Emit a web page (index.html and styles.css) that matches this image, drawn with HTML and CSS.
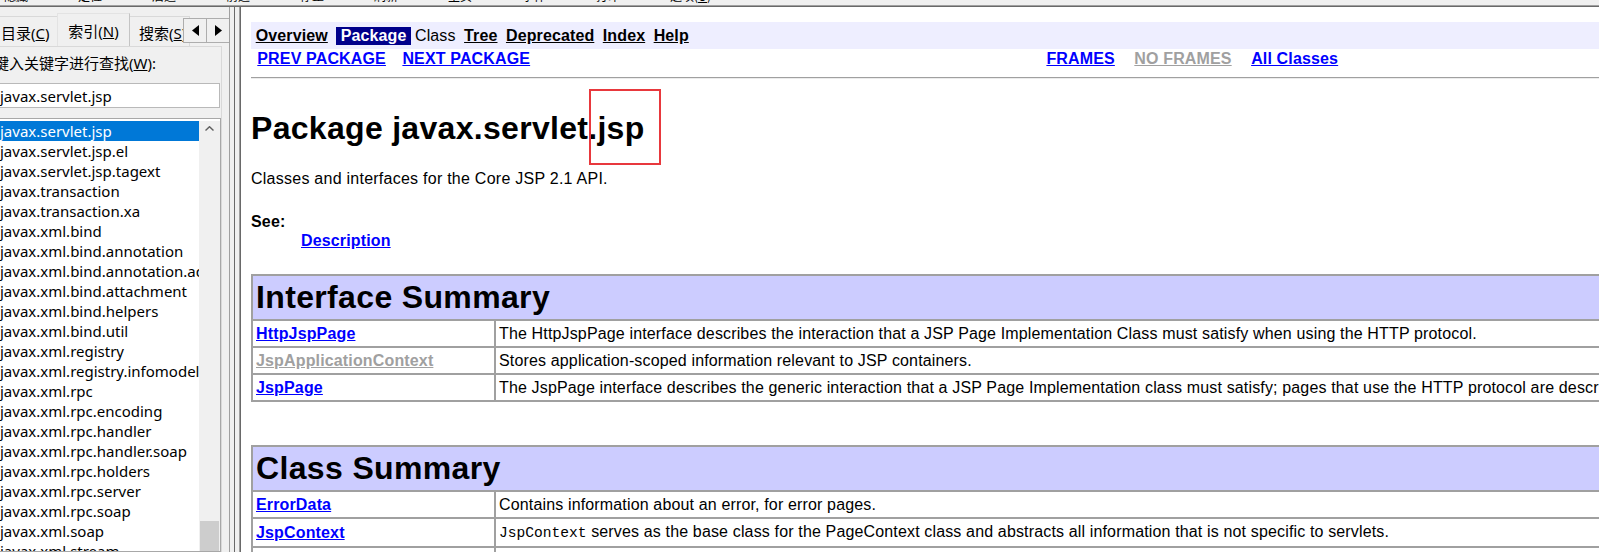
FILE: index.html
```html
<!DOCTYPE html>
<html lang="zh-CN">
<head>
<meta charset="utf-8">
<title>Package javax.servlet.jsp</title>
<link rel="stylesheet" href="styles.css">
</head>
<body>
<div class="window">
  <div class="toolbar">
    <span>隐藏</span><span>定位</span><span>后退</span><span>前进</span><span>停止</span><span>刷新</span><span>主页</span><span>字体</span><span>打印</span><span>选项(<u>O</u>)</span>
  </div>
  <div class="hsep"></div>
  <div class="main">
    <aside class="nav-pane">
      <div class="tabs">
        <div class="tab tab-c">目录(<u>C</u>)</div>
        <div class="tab tab-n">索引(<u>N</u>)</div>
        <div class="tab tab-s">搜索(<u>S</u>)</div>
      </div>
      <div class="tab-arrows">
        <div class="arr"><svg width="7" height="11" viewBox="0 0 7 11"><polygon points="7,0 7,11 0,5.5" fill="#000"/></svg></div>
        <div class="arr arr-r"><svg width="7" height="11" viewBox="0 0 7 11"><polygon points="0,0 0,11 7,5.5" fill="#000"/></svg></div>
      </div>
      <div class="tab-panel">
        <div class="kw-label">键入关键字进行查找(<u>W</u>):</div>
        <div class="kw-input">javax.servlet.jsp</div>
        <div class="listbox">
          <ul class="items">
            <li class="sel">javax.servlet.jsp</li>
            <li>javax.servlet.jsp.el</li>
            <li>javax.servlet.jsp.tagext</li>
            <li>javax.transaction</li>
            <li>javax.transaction.xa</li>
            <li>javax.xml.bind</li>
            <li>javax.xml.bind.annotation</li>
            <li>javax.xml.bind.annotation.adapters</li>
            <li>javax.xml.bind.attachment</li>
            <li>javax.xml.bind.helpers</li>
            <li>javax.xml.bind.util</li>
            <li>javax.xml.registry</li>
            <li>javax.xml.registry.infomodel</li>
            <li>javax.xml.rpc</li>
            <li>javax.xml.rpc.encoding</li>
            <li>javax.xml.rpc.handler</li>
            <li>javax.xml.rpc.handler.soap</li>
            <li>javax.xml.rpc.holders</li>
            <li>javax.xml.rpc.server</li>
            <li>javax.xml.rpc.soap</li>
            <li>javax.xml.soap</li>
            <li>javax.xml.stream</li>
          </ul>
          <div class="vscroll">
            <div class="up"><svg width="9" height="5" viewBox="0 0 9 5"><polyline points="0.5,4.5 4.5,0.7 8.5,4.5" fill="none" stroke="#606060" stroke-width="1.4"/></svg></div>
            <div class="thumb"></div>
          </div>
        </div>
      </div>
    </aside>
    <div class="splitter"></div>
    <main class="doc-pane">
      <div class="doc">
        <div class="navbar1">
          <a class="nb" href="#">Overview</a>
          <span class="nb rev">Package</span>
          <span class="nb plain">Class</span>
          <a class="nb" href="#">Tree</a>
          <a class="nb" href="#">Deprecated</a>
          <a class="nb" href="#">Index</a>
          <a class="nb" href="#">Help</a>
        </div>
        <div class="navbar2">
          <div class="nav2-left">
            <a class="lnk" href="#">PREV PACKAGE</a>
            <a class="lnk next" href="#">NEXT PACKAGE</a>
          </div>
          <div class="nav2-right">
            <a class="lnk" href="#">FRAMES</a>
            <a class="lnk gray sp" href="#">NO FRAMES</a>
            <a class="lnk sp" href="#">All Classes</a>
          </div>
        </div>
        <div class="hr"></div>
        <h1 class="title">Package javax.servlet<span class="mark">.jsp</span></h1>
        <p class="desc">Classes and interfaces for the Core JSP 2.1 API.</p>
        <dl class="see">
          <dt>See:</dt>
          <dd><a class="lnk" href="#">Description</a></dd>
        </dl>
        <table class="summary">
          <colgroup><col class="c1"><col class="c2"></colgroup>
          <tr><th colspan="2">Interface Summary</th></tr>
          <tr><td><a class="lnk" href="#">HttpJspPage</a></td><td>The HttpJspPage interface describes the interaction that a JSP Page Implementation Class must satisfy when using the HTTP protocol.</td></tr>
          <tr><td><a class="lnk gray" href="#">JspApplicationContext</a></td><td>Stores application-scoped information relevant to JSP containers.</td></tr>
          <tr><td><a class="lnk" href="#">JspPage</a></td><td>The JspPage interface describes the generic interaction that a JSP Page Implementation class must satisfy; pages that use the HTTP protocol are described by the HttpJspPage interface.</td></tr>
        </table>
        <table class="summary second">
          <colgroup><col class="c1"><col class="c2"></colgroup>
          <tr><th colspan="2">Class Summary</th></tr>
          <tr><td><a class="lnk" href="#">ErrorData</a></td><td>Contains information about an error, for error pages.</td></tr>
          <tr><td><a class="lnk" href="#">JspContext</a></td><td><code>JspContext</code> serves as the base class for the PageContext class and abstracts all information that is not specific to servlets.</td></tr>
          <tr><td><a class="lnk" href="#">JspEngineInfo</a></td><td>The JspEngineInfo is an abstract class that provides information on the current JSP engine.</td></tr>
        </table>
      </div>
    </main>
  </div>
</div>
</body>
</html>
```
FILE: styles.css
```css
* { box-sizing: border-box; }
html, body { margin: 0; padding: 0; overflow: hidden; }
body {
  width: 1599px;
  height: 552px;
  background: #f0f0f0;
  color: #000;
  font-family: "Liberation Sans", Arial, sans-serif;
}
.window { display: flex; flex-direction: column; height: 552px; }

/* clipped toolbar labels at the very top */
.toolbar {
  flex: none;
  height: 5px;
  overflow: hidden;
  display: flex;
  padding-left: 4px;
  font: 12px/16px "Noto Sans CJK SC", sans-serif;
}
.toolbar span { flex: none; width: 74px; margin-top: -12px; }
.hsep { flex: none; height: 2px; border-top: 1px solid #a0a0a0; border-bottom: 1px solid #696969; }

.main { flex: 1; display: flex; min-height: 0; }

/* ---------- left help navigation pane ---------- */
.nav-pane {
  flex: none;
  width: 237px;
  margin-left: -8px;
  position: relative;
  display: flex;
  flex-direction: column;
  overflow: hidden;
  font: 15px "Noto Sans", "Noto Sans CJK SC", sans-serif;
}
.tabs { flex: none; height: 39px; display: flex; align-items: flex-end; padding-left: 1px; }
.tab {
  flex: none;
  height: 30px;
  line-height: 32px;
  border: 1px solid #d9d9d9;
  border-bottom: none;
  white-space: nowrap;
  overflow: hidden;
  background: #f0f0f0;
}
.tab-c { width: 64px; padding-left: 7px; border-right: none; }
.tab-n {
  width: 73px;
  height: 33px;
  line-height: 35px;
  text-align: center;
  border-color: #e3e3e3 #c4c4c4 #e3e3e3 #e3e3e3;
}
.tab-s { width: 60px; padding-left: 9px; border-left: none; }

.tab-arrows { position: absolute; left: 191px; top: 11px; display: flex; }
.arr {
  width: 24px;
  height: 25px;
  border: 1px solid #adadad;
  background: #f0f0f0;
  display: flex;
  align-items: center;
  justify-content: center;
}
.arr-r { margin-left: -1px; }

.tab-panel {
  flex: 1;
  min-height: 0;
  width: 230px;
  border-top: 1px solid #d9d9d9;
  border-right: 1px solid #d9d9d9;
  padding: 6px 0 0 2px;
  display: flex;
  flex-direction: column;
}
.kw-label { line-height: 20px; white-space: nowrap; }
.kw-input {
  margin-top: 10px;
  width: 226px;
  height: 25px;
  border: 1px solid #b9b9b9;
  background: #fff;
  padding: 1px 0 0 5px;
  line-height: 22px;
  white-space: nowrap;
}
.listbox {
  margin-top: 10px;
  flex: 1;
  min-height: 0;
  width: 227px;
  display: flex;
  border: 1px solid #a8a8a8;
  padding-top: 2px;
  background: #fff;
  overflow: hidden;
}
.items { flex: 1; min-width: 0; margin: 0; padding: 0; list-style: none; overflow: hidden; }
.items li { height: 20px; line-height: 20px; padding-left: 5px; white-space: nowrap; overflow: hidden; }
.items li.sel { background: #0078d7; color: #fff; }
.vscroll { flex: none; width: 21px; background: #f0f0f0; display: flex; flex-direction: column; }
.up { height: 21px; display: flex; align-items: center; justify-content: center; }
.thumb { width: 19px; height: 40px; margin: 384px 0 0 1px; background: #cdcdcd; }

.splitter {
  flex: none;
  width: 12px;
  background: linear-gradient(to right,
    #a0a0a0 0 1px, #f0f0f0 1px 5px, #696969 5px 6px,
    #f0f0f0 6px 10px, #a0a0a0 10px 11px, #696969 11px 12px);
}

/* ---------- javadoc content pane ---------- */
.doc-pane { flex: 1; min-width: 0; background: #fff; overflow: hidden; }
.doc { width: 1650px; padding: 15px 0 0 10px; font-size: 16px; }

a { color: #0000ff; }
.lnk { font-weight: bold; color: #0000ff; text-decoration: underline; letter-spacing: 0.15px; }
.lnk.gray { color: #a0a0a0; }

.navbar1 {
  height: 27px;
  background: #eeeeff;
  display: flex;
  align-items: center;
  gap: 4px;
  padding-left: 4.7px;
}
.nb {
  font-weight: bold;
  color: #000;
  line-height: 18px;
  padding-right: 0.28em;
  letter-spacing: 0.12px;
  text-decoration: underline;
}
.nb.rev { background: #00008b; color: #fff; padding-left: 0.28em; text-decoration: none; }
.nb.plain { font-weight: normal; text-decoration: none; }

.navbar2 { margin-top: 1px; height: 18px; line-height: 18px; display: flex; white-space: nowrap; }
.nav2-left { width: 791px; padding-left: 6.3px; }
.nav2-left .next { margin-left: 12px; }
.nav2-right { padding-left: 4.4px; }
.nav2-right .sp { margin-left: 15px; }

.hr { margin-top: 9px; height: 2px; border-top: 1px solid #a0a0a0; border-bottom: 1px solid #ececec; }

.title {
  margin: 31px 0 0;
  font-size: 32px;
  line-height: 37px;
  font-weight: bold;
  letter-spacing: 0.3px;
  white-space: nowrap;
}
.mark { position: relative; }
.mark::after {
  content: "";
  position: absolute;
  left: 1px;
  right: -16px;
  top: -21px;
  bottom: -19px;
  border: 2px solid #e8383d;
}

.desc { margin: 23px 0 0; line-height: 18px; letter-spacing: 0.25px; }
.see { margin: 24px 0 0; line-height: 19px; }
.see dt { font-weight: bold; letter-spacing: 0.2px; }
.see dd { margin: 0 0 0 50px; }

.summary {
  margin-top: 24px;
  width: 1620px;
  table-layout: fixed;
  border-collapse: separate;
  border-spacing: 0;
  border: 1px solid #a0a0a0;
}
.summary.second { margin-top: 43px; }
.summary .c1 { width: 243px; }
.summary th, .summary td {
  border: 1px solid #a0a0a0;
  padding: 3px;
  text-align: left;
  vertical-align: middle;
  white-space: nowrap;
}
.summary th {
  background: #ccccff;
  font-size: 32px;
  line-height: 37px;
  font-weight: bold;
  letter-spacing: 0.35px;
}
.summary td { font-size: 16px; line-height: 19px; letter-spacing: 0.15px; }
.summary code { font-family: "Liberation Mono", "Courier New", monospace; font-size: 14.6px; letter-spacing: 0; }
```
